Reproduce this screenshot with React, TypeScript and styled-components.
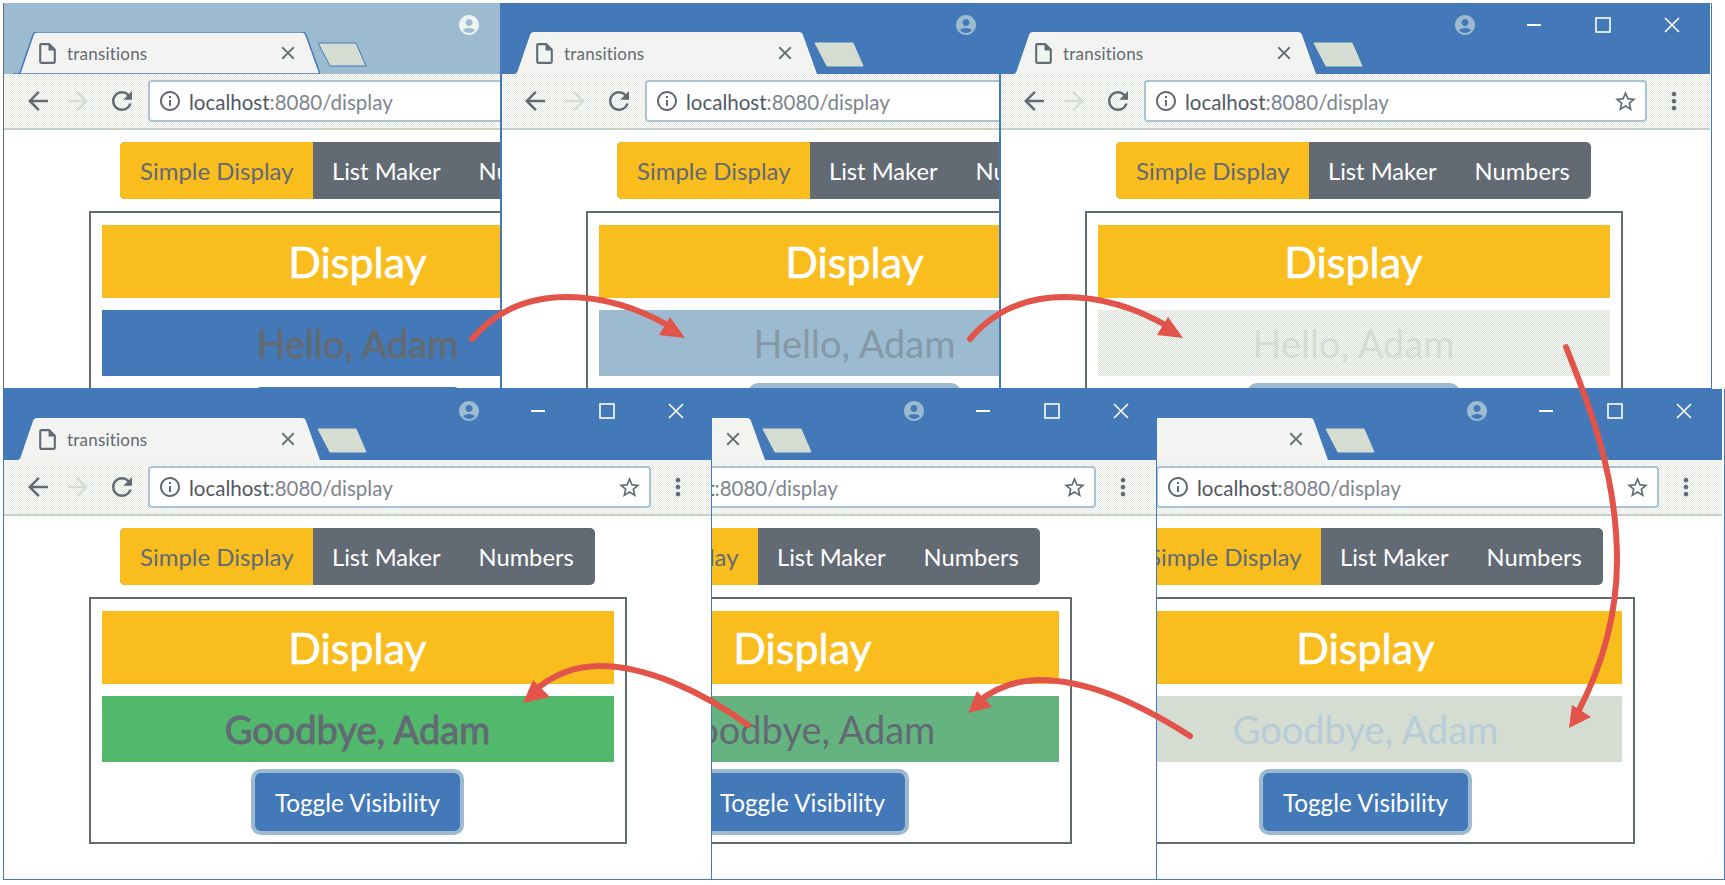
import React from 'react';
import styled, { createGlobalStyle, css } from 'styled-components';
import {
  MdAccountCircle,
  MdArrowBack,
  MdArrowForward,
  MdClose,
  MdInfoOutline,
  MdMoreVert,
  MdOutlineInsertDriveFile,
  MdRefresh,
  MdStarBorder,
} from 'react-icons/md';

const BLUE = '#4379b9';
const FADED = '#9cbbd0';
const SLATE = '#626a73';
const YELLOW = '#fabd1e';
const PALE = '#d5ddd2';
const RED = '#e2534a';

type Shot = {
  x: number;
  y: number;
  w: number;
  h: number;
  crop: number;
  title: string;
  tabEdge?: string;
  profile: string;
  edge: string;
  greeting: string;
  msgBg: string;
  msgDither?: string;
  msgColor: string;
  msgHeavy?: boolean;
  btnBg: string;
  btnRing: string;
};

const shots: Shot[] = [
  { x: 3, y: 3, w: 498, h: 386, crop: 0, title: FADED, tabEdge: BLUE, profile: '#eef2f0', edge: SLATE, greeting: 'Hello, Adam', msgBg: BLUE, msgColor: SLATE, msgHeavy: true, btnBg: BLUE, btnRing: 'transparent' },
  { x: 501, y: 3, w: 499, h: 386, crop: 1, title: BLUE, profile: FADED, edge: BLUE, greeting: 'Hello, Adam', msgBg: FADED, msgColor: '#8698a8', btnBg: FADED, btnRing: FADED },
  { x: 1000, y: 3, w: 712, h: 386, crop: 1, title: BLUE, profile: FADED, edge: BLUE, greeting: 'Hello, Adam', msgBg: '#fff', msgDither: PALE, msgColor: PALE, btnBg: FADED, btnRing: FADED },
  { x: 3, y: 389, w: 712, h: 491, crop: 0, title: BLUE, profile: FADED, edge: BLUE, greeting: 'Goodbye, Adam', msgBg: '#52b86b', msgColor: SLATE, msgHeavy: true, btnBg: BLUE, btnRing: FADED },
  { x: 711, y: 389, w: 449, h: 491, crop: 263, title: BLUE, profile: FADED, edge: BLUE, greeting: 'Goodbye, Adam', msgBg: '#52b86b', msgDither: '#78ae93', msgColor: SLATE, btnBg: BLUE, btnRing: FADED },
  { x: 1156, y: 389, w: 569, h: 491, crop: 145, title: BLUE, profile: FADED, edge: BLUE, greeting: 'Goodbye, Adam', msgBg: PALE, msgColor: '#b7ccd6', btnBg: BLUE, btnRing: FADED },
];

const dither = (color: string) => css`
  background-image: repeating-conic-gradient(${color} 0 25%, transparent 0 50%);
  background-size: 2px 2px;
`;

const GlobalStyle = createGlobalStyle`
  html, body {
    margin: 0;
    padding: 0;
    background: #fff;
  }
  body {
    font-family: Lato, "Liberation Sans", sans-serif;
  }
`;

const Desktop = styled.div`
  position: relative;
  width: 1725px;
  height: 885px;
  overflow: hidden;
  background: #fff;
`;

const Frame = styled.div<{ $x: number; $y: number; $w: number; $h: number; $edge: string }>`
  position: absolute;
  left: ${(p) => p.$x}px;
  top: ${(p) => p.$y}px;
  width: ${(p) => p.$w}px;
  height: ${(p) => p.$h}px;
  box-sizing: border-box;
  overflow: hidden;
  background: #fff;
  border-left: 1px solid ${(p) => p.$edge};
  border-right: 1px solid ${BLUE};
  border-bottom: 1px solid ${BLUE};
`;

const Browser = styled.div<{ $crop: number }>`
  width: 710px;
  margin-left: -${(p) => p.$crop}px;
`;

const TitleBar = styled.div<{ $bg: string }>`
  display: flex;
  align-items: flex-end;
  height: 71px;
  padding-left: 9px;
  background: ${(p) => p.$bg};
`;

const Tab = styled.div`
  position: relative;
  display: flex;
  align-items: center;
  box-sizing: border-box;
  width: 307px;
  height: 42px;
  padding: 0 21px 0 22px;
  gap: 7px;
  color: ${SLATE};
`;

const TabShape = styled.svg`
  position: absolute;
  left: 0;
  top: 0;
`;

const TabTitle = styled.span`
  position: relative;
  flex: 1;
  font-size: 17px;
  letter-spacing: 0.2px;
  white-space: nowrap;
`;

const TabIcon = styled.span`
  position: relative;
  display: flex;
`;

const NewTab = styled.svg`
  flex: none;
  margin: 0 0 7px -3px;
`;

const Controls = styled.div`
  display: flex;
  align-self: flex-start;
  height: 44px;
  margin-left: auto;
  padding-right: 4px;
`;

const Control = styled.div<{ $color?: string }>`
  display: flex;
  align-items: center;
  justify-content: center;
  width: 69px;
  color: ${(p) => p.$color || '#fff'};
`;

const Toolbar = styled.div`
  display: flex;
  align-items: center;
  box-sizing: border-box;
  height: 56px;
  padding-left: 15px;
  background-color: #fff;
  ${dither('#e3e8e1')}
  border-bottom: 2px solid #c6d1c8;
`;

const NavButton = styled.div<{ $color?: string; $w: number }>`
  display: flex;
  align-items: center;
  justify-content: center;
  width: ${(p) => p.$w}px;
  color: ${(p) => p.$color || SLATE};
`;

const UrlBox = styled.div`
  display: flex;
  align-items: center;
  box-sizing: border-box;
  width: 503px;
  height: 42px;
  margin-left: 3px;
  padding: 0 7px 0 8px;
  gap: 7px;
  background: #fff;
  border: 2px solid #a9c3d3;
  border-radius: 4px;
  color: ${SLATE};
`;

const UrlText = styled.span`
  flex: 1;
  padding-top: 1px;
  font-size: 20.5px;
  color: #7d858e;
  white-space: nowrap;
`;

const UrlHost = styled.span`
  color: #4f5964;
`;

const Page = styled.div`
  display: flex;
  flex-direction: column;
  align-items: center;
  width: 707px;
  padding-top: 12px;
`;

const Nav = styled.div`
  display: flex;
  width: 475px;
  height: 57px;
  margin-bottom: 12px;
  border-radius: 5px;
  overflow: hidden;
  background: ${SLATE};
  font-size: 23.7px;
  color: #fff;
  white-space: nowrap;
`;

const NavLink = styled.div<{ $active?: boolean }>`
  display: flex;
  align-items: center;
  flex: none;
  padding: 0 19px;
  ${(p) =>
    p.$active &&
    css`
      width: 193px;
      box-sizing: border-box;
      padding: 0 20px;
      background: ${YELLOW};
      color: ${SLATE};
      font-size: 24px;
    `}
`;

const Panel = styled.div`
  display: flex;
  flex-direction: column;
  align-items: center;
  box-sizing: border-box;
  width: 538px;
  height: 247px;
  padding: 12px 11px 0;
  border: 2px solid ${SLATE};
`;

const Heading = styled.div`
  display: flex;
  align-items: center;
  justify-content: center;
  align-self: stretch;
  height: 73px;
  margin-bottom: 12px;
  background: ${YELLOW};
  color: #fff;
  font-size: 43px;
  -webkit-text-stroke: 0.6px #fff;
`;

const Message = styled.div<{ $bg: string; $dither?: string; $color: string; $heavy?: boolean }>`
  display: flex;
  align-items: center;
  justify-content: center;
  align-self: stretch;
  height: 66px;
  background-color: ${(p) => p.$bg};
  ${(p) => p.$dither && dither(p.$dither)}
  color: ${(p) => p.$color};
  font-size: 38px;
  white-space: nowrap;
  ${(p) => p.$heavy && `-webkit-text-stroke: 0.9px ${p.$color};`}
`;

const ToggleButton = styled.div<{ $bg: string; $ring: string }>`
  display: flex;
  align-items: center;
  justify-content: center;
  width: 205px;
  height: 58px;
  margin-top: 11px;
  border-radius: 6px;
  background: ${(p) => p.$bg};
  box-shadow: 0 0 0 4px ${(p) => p.$ring};
  color: #fff;
  font-size: 24.3px;
  white-space: nowrap;
`;

const ArrowLayer = styled.svg`
  position: absolute;
  left: 0;
  top: 0;
  pointer-events: none;
`;

const TabOutline = ({ fill, edge }: { fill: string; edge?: string }) => (
  <TabShape width="307" height="42" viewBox="0 0 307 42">
    <path
      d="M0 42H4Q6.500 42 7.500 39.500L20 3Q21 0 24 0H289Q292 0 293 3L307 42Z"
      fill={fill}
      stroke={edge || 'none'}
      strokeWidth="1.5"
    />
  </TabShape>
);

const BrowserShot = ({ shot }: { shot: Shot }) => (
  <Frame $x={shot.x} $y={shot.y} $w={shot.w} $h={shot.h} $edge={shot.edge}>
    <Browser $crop={shot.crop}>
      <TitleBar $bg={shot.title}>
        <Tab>
          <TabOutline fill="#f3f4f1" edge={shot.tabEdge} />
          <TabIcon>
            <MdOutlineInsertDriveFile size={25} />
          </TabIcon>
          <TabTitle>transitions</TabTitle>
          <TabIcon>
            <MdClose size={22} />
          </TabIcon>
        </Tab>
        <NewTab width="50" height="25" viewBox="0 0 50 25">
          <path
            d="M1 1H39L49 24H13Z"
            fill={PALE}
            stroke={shot.tabEdge || PALE}
            strokeWidth="1"
          />
        </NewTab>
        <Controls>
          <Control $color={shot.profile}>
            <MdAccountCircle size={24} />
          </Control>
          <Control>
            <svg width="16" height="16" viewBox="0 0 16 16">
              <path d="M1 8H15" stroke="currentColor" strokeWidth="2" />
            </svg>
          </Control>
          <Control>
            <svg width="16" height="16" viewBox="0 0 16 16">
              <rect x="1" y="1" width="14" height="14" fill="none" stroke="currentColor" strokeWidth="1.6" />
            </svg>
          </Control>
          <Control>
            <svg width="16" height="16" viewBox="0 0 16 16">
              <path d="M1 1L15 15M15 1L1 15" stroke="currentColor" strokeWidth="1.6" />
            </svg>
          </Control>
        </Controls>
      </TitleBar>
      <Toolbar>
        <NavButton $w={38}>
          <MdArrowBack size={30} />
        </NavButton>
        <NavButton $w={42} $color={PALE}>
          <MdArrowForward size={30} />
        </NavButton>
        <NavButton $w={46}>
          <MdRefresh size={30} />
        </NavButton>
        <UrlBox>
          <MdInfoOutline size={24} />
          <UrlText>
            <UrlHost>localhost</UrlHost>:8080/display
          </UrlText>
          <MdStarBorder size={25} />
        </UrlBox>
        <NavButton $w={54}>
          <MdMoreVert size={28} />
        </NavButton>
      </Toolbar>
      <Page>
        <Nav>
          <NavLink $active>Simple Display</NavLink>
          <NavLink>List Maker</NavLink>
          <NavLink>Numbers</NavLink>
        </Nav>
        <Panel>
          <Heading>Display</Heading>
          <Message
            $bg={shot.msgBg}
            $dither={shot.msgDither}
            $color={shot.msgColor}
            $heavy={shot.msgHeavy}
          >
            {shot.greeting}
          </Message>
          <ToggleButton $bg={shot.btnBg} $ring={shot.btnRing}>
            Toggle Visibility
          </ToggleButton>
        </Panel>
      </Page>
    </Browser>
  </Frame>
);

const arrows = [
  { line: 'M472 339C500 306 535 297 567 297C603 297 640 309 671 327', head: '685,338 670,317 659,335' },
  { line: 'M970 339C998 306 1033 297 1065 297C1101 297 1138 309 1169 327', head: '1183,338 1168,317 1157,335' },
  { line: 'M1566 347C1585 395 1617 470 1617 560C1617 620 1600 670 1578 712', head: '1569,728 1572,705 1591,717' },
  { line: 'M1190 736C1145 707 1090 680 1040 680C1015 680 995 688 978 702', head: '968,713 977,691 992,707' },
  { line: 'M748 725C700 690 645 666 600 666C575 666 552 675 533 692', head: '523,703 533,680 550,697' },
];

const App = () => (
  <Desktop>
    <GlobalStyle />
    {shots.map((shot) => (
      <BrowserShot key={shot.x + '-' + shot.y} shot={shot} />
    ))}
    <ArrowLayer width="1725" height="885" viewBox="0 0 1725 885">
      {arrows.map((a) => (
        <g key={a.head}>
          <path d={a.line} fill="none" stroke={RED} strokeWidth="6" strokeLinecap="round" />
          <polygon points={a.head} fill={RED} />
        </g>
      ))}
    </ArrowLayer>
  </Desktop>
);

export default App;
